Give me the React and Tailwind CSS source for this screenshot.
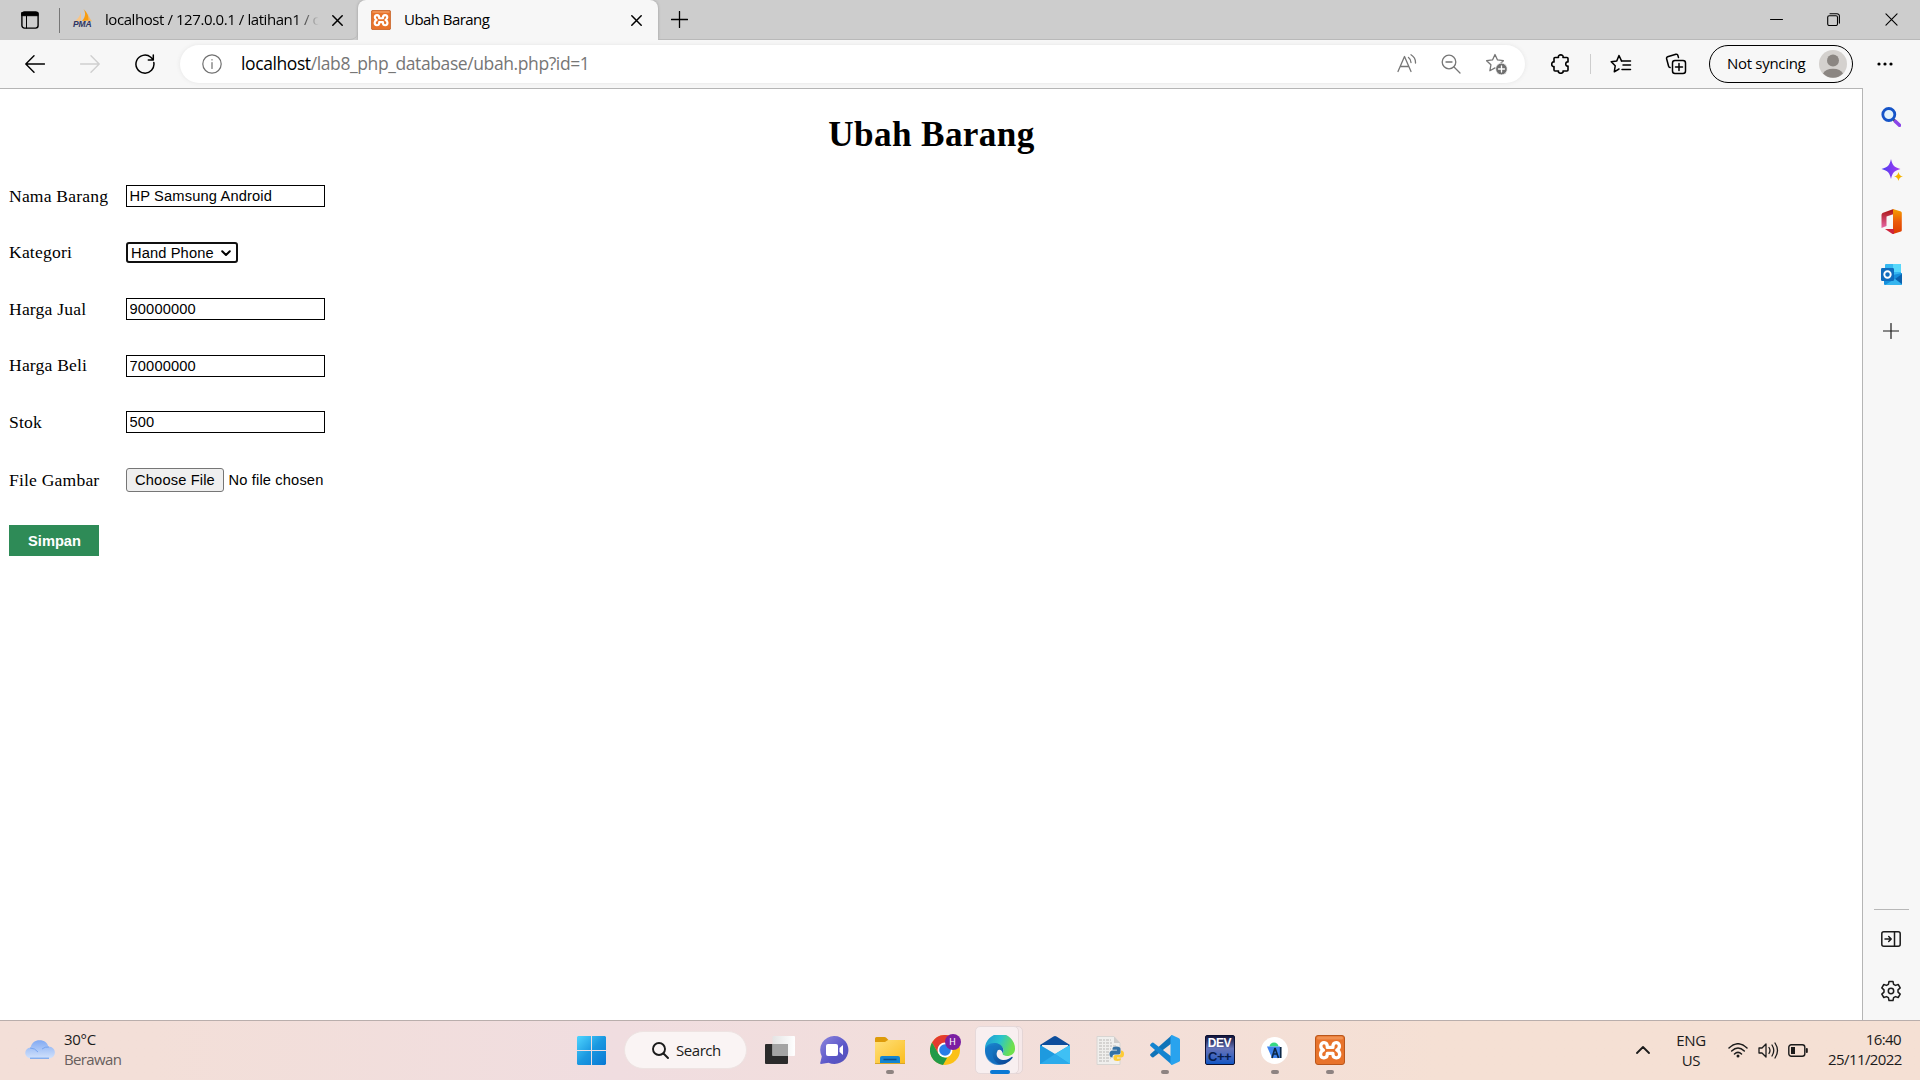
import React from "react";

const ui = "font-['Open_Sans','Noto_Sans',sans-serif]";

function Svg({ w = 20, h, vb, className = "", sw = 1.4, children }) {
  const hh = h || w;
  return (
    <svg width={w} height={hh} viewBox={vb || `0 0 ${w} ${hh}`} fill="none" stroke="currentColor" strokeWidth={sw} strokeLinecap="round" strokeLinejoin="round" className={"block shrink-0 " + className}>
      {children}
    </svg>
  );
}

function Close({ s = 11, sw = 1.5 }) {
  return (
    <Svg w={s} vb="0 0 11 11" sw={sw}>
      <path d="M.8 .8l9.4 9.4M10.2 .8L.8 10.2" />
    </Svg>
  );
}

function Xampp({ size }) {
  return (
    <svg width={size} height={size} viewBox="0 0 30 30" className="block shrink-0">
      <rect x=".5" y=".5" width="29" height="29" rx="2.5" fill="#e8732b" stroke="#b9561b" />
      <rect x="2" y="1.5" width="26" height="3" rx="1.5" fill="#f5a56d" opacity=".6" />
      <path d="M12.300 11.500C12.300 6.500 5.800 6.500 5.800 11c0 2 1 3.200 2.600 4.100C6.500 16 5.500 17.300 5.500 19.300c0 4.700 6.500 4.700 6.800.2v-1.200h5.600v1.200c.3 4.500 6.800 4.500 6.800-.2 0-2-1-3.300-2.900-4.200 1.600-.9 2.600-2.100 2.600-4.100 0-4.500-6.500-4.500-6.500.5v.9h-5.600z" fill="none" stroke="#fff" strokeWidth="3.300" strokeLinejoin="round" />
    </svg>
  );
}

function Pma() {
  return (
    <div className="relative h-[21px] w-[21px] shrink-0">
      <svg width="21" height="21" viewBox="0 0 21 21" className="block">
        <path d="M8 1.500C8 6 5 10 1.500 12.500L8 11.500z" fill="#f9c585" />
        <path d="M10.500 0c2.500 4 2 8-1.500 12l7-.5C16 7 14 3 10.500 0z" fill="#f89c0e" />
        <path d="M15.500 4c0 4 1.500 6 4 8.500l-4-.8z" fill="#f7b763" />
      </svg>
      <span className="absolute top-[11px] left-0 font-['Liberation_Sans',sans-serif] text-[8.500px] leading-[9px] font-bold tracking-[-0.1px] text-[#2f3561] italic">PMA</span>
    </div>
  );
}

function TabBar() {
  return (
    <div className="flex h-10 shrink-0 items-stretch bg-[#cdcdcd] text-black">
      <div className="flex w-[59px] items-center pl-[21px]">
        <Svg w={18}>
          <rect x=".9" y=".9" width="16.200" height="16.200" rx="2.500" />
          <path d="M1 1.500h16v3.200H1z" fill="currentColor" strokeWidth="1" />
          <path d="M5.500 5v12" strokeWidth="1" />
        </Svg>
      </div>
      <div className="mt-2 h-[25px] w-px bg-[#777]" />
      <div className="flex w-[298px] items-center rounded-br-lg border-b border-[#b9b9b9] pl-[13px]">
        <Pma />
        <div className={ui + " ml-[11px] w-[218px] bg-linear-to-r from-black from-86% to-[#cdcdcd] to-98% bg-clip-text text-[15px] tracking-[-0.43px] whitespace-nowrap text-transparent"}>localhost / 127.0.0.1 / latihan1 / c</div>
        <div className="ml-[9px] pt-px"><Close /></div>
      </div>
      <div className="flex w-[300px] items-center rounded-t-lg bg-[#f7f7f7] pl-[13px] shadow-[0_0_3px_#9a9a9a]">
        <Xampp size={20} />
        <span className={ui + " mb-[2px] ml-[13px] grow text-[15px] tracking-[-0.550px]"}>Ubah Barang</span>
        <div className="mr-[16px] pt-px"><Close /></div>
      </div>
      <div className="flex grow items-center border-b border-[#b9b9b9]">
        <Svg w={17} className="ml-[13px]" sw={1.300}><path d="M8.500 .5v16M.5 8.500h16" /></Svg>
        <Svg w={13} className="ml-auto"><path d="M.5 6.500h12" strokeWidth="1" /></Svg>
        <Svg w={13} className="ml-[44px]" sw={1.100}>
          <rect x=".7" y="2.700" width="9.800" height="9.800" rx="1.500" />
          <path d="M3 .7h7a2.400 2.400 0 0 1 2.400 2.400v7" />
        </Svg>
        <div className="mr-[22px] ml-[45px]"><Close s={13} sw={0.950} /></div>
      </div>
    </div>
  );
}

const starPath = "M10 1.500l2.500 5.400 5.900.8-4.300 4.100 1 5.900L10 14.900l-5.100 2.800 1-5.900L1.600 7.700l5.900-.8z";

function Toolbar() {
  return (
    <div className="flex h-12 shrink-0 items-center bg-[#f7f7f7] pb-px text-black">
      <Svg w={20} h={18} className="ml-[25px]"><path d="M19.500 9H1M9 .8L.8 9 9 17.200" /></Svg>
      <Svg w={20} h={18} className="ml-[35px] text-[#cfcfcf]"><path d="M.5 9H19M11 .8L19.200 9 11 17.200" /></Svg>
      <Svg w={20} className="ml-[35px]" sw={1.500}><path d="M18.800 8.500a9 9 0 1 1-3-5.200l2.200 2.200M18.300 1v5h-5" /></Svg>
      <div className="ml-[25px] flex h-[38px] w-[1345px] items-center rounded-full bg-white shadow-[0_0_4px_#e5e5e5]">
        <Svg w={20} className="ml-[22px] text-[#707070]" sw={1.200}>
          <circle cx="10" cy="10" r="9.200" /><path d="M10 8.500v6M10 5.500v.5" />
        </Svg>
        <div className={ui + " ml-[19px] grow text-[17.500px] tracking-[-0.400px] text-[#767676]"}><span className="text-black">localhost</span>/lab8_php_database/ubah.php?id=1</div>
        <Svg w={20} className="text-[#767676]" sw={1.300}><path d="M1 17.500L7.500 2.500 14 17.500M3.300 12.500h8.400M11.500 3.500q2.500 1.800 2.500 5M14 .8q4.800 3 4.500 8.200" /></Svg>
        <Svg w={20} className="ml-[24px] text-[#767676]" sw={1.300}><circle cx="8" cy="8" r="6.800" /><path d="M13 13l6 6M5 8h6" /></Svg>
        <Svg w={23} h={22} className="mr-[17px] ml-[24px] text-[#767676]" sw={1.300}>
          <path d={starPath} />
          <circle cx="16.500" cy="16" r="5.900" fill="#707070" stroke="#fff" strokeWidth=".8" /><path d="M16.500 13v6M13.500 16h6" stroke="#fff" />
        </Svg>
      </div>
      <Svg w={20} className="ml-[26px]" sw={1.600}>
        <path d="M4 3.500h3.500c-1-3.500 5.500-3.500 4.500 0H16a1 1 0 0 1 1 1V8c-3-1-3 5 0 4v4a1 1 0 0 1-1 1h-4c1 3-5.500 3-4.500 0H4a1 1 0 0 1-1-1v-3.500c-3 1-3-5.500 0-4.500V4.500a1 1 0 0 1 1-1z" />
      </Svg>
      <div className="ml-[19px] h-5 w-px bg-[#cdcdcd]" />
      <Svg w={22} h={20} className="ml-[19px]" sw={1.500}>
        <path d="M11.500 6.900L9 1.500 6.800 6.900l-5.600.8 4 4.100-.9 6 4.700-2.800" /><path d="M11.500 6.900h9M13 11h7.500M12 15.500h8.500" />
      </Svg>
      <Svg w={22} className="ml-[33px]" sw={1.500}>
        <rect x="7.500" y="7.500" width="13" height="13" rx="2.500" /><path d="M14 10.500v7M10.500 14h7M13.500 4.500l-.7-2.200a1.500 1.500 0 0 0-1.900-1L2.600 3.800a1.500 1.500 0 0 0-1 1.900l2 7.500q.4 1.200 1.500 1.400" />
      </Svg>
      <div className="ml-[22px] flex h-[38px] w-[144px] items-center rounded-full border-[1.500px] border-black pl-[17px]">
        <span className={ui + " w-[84px] pb-px text-[15px] tracking-[-0.3px] whitespace-nowrap"}>Not syncing</span>
        <svg width="28" height="28" viewBox="0 0 28 28" className="ml-[8px] block shrink-0">
          <circle cx="14" cy="14" r="14" fill="#d4d1ce" /><circle cx="14" cy="10.500" r="6" fill="#8b8682" /><path d="M4 23.500a10.500 7 0 0 1 20 0 14 14 0 0 1-20 0z" fill="#8b8682" />
        </svg>
      </div>
      <Svg w={18} h={4} className="ml-[23px]"><g fill="currentColor" stroke="none"><circle cx="3" cy="2" r="1.600" /><circle cx="9" cy="2" r="1.600" /><circle cx="15" cy="2" r="1.600" /></g></Svg>
    </div>
  );
}

function Row({ label, children }) {
  return (
    <div className="flex h-[56.500px] items-center">
      <label className="mb-px w-[117px] text-[17.600px] leading-[20px] tracking-[0.180px]">{label}</label>
      {children}
    </div>
  );
}

function Field({ value }) {
  return <input defaultValue={value} className="h-[22px] w-[199px] border border-black bg-white px-[2.500px] font-['Liberation_Sans',Arial,sans-serif] text-[14.667px] leading-[18px] tracking-[0.150px] text-black" />;
}

function Page() {
  return (
    <main className="w-[1863px] border-t border-r border-[#b5b5b5] bg-white pl-[9px] font-['Liberation_Serif','Times_New_Roman',serif] text-black">
      <h1 className="mt-[25px] -ml-[9px] h-[54px] pt-px pl-px text-center text-[35.200px] leading-[40px] font-bold tracking-[0.360px]">Ubah Barang</h1>
      <Row label="Nama Barang"><Field value="HP Samsung Android" /></Row>
      <Row label="Kategori">
        <button className="flex h-[21px] w-[112px] items-center justify-between rounded-[3px] border-2 border-[#101010] bg-white pt-px pr-[5px] pl-[3px] font-['Liberation_Sans',Arial,sans-serif] text-[14.667px] leading-[17px] tracking-[0.120px] whitespace-nowrap">
          Hand Phone
          <Svg w={10} h={7} sw={2}><path d="M1.200 1.200L5 5l3.800-3.800" /></Svg>
        </button>
      </Row>
      <Row label="Harga Jual"><Field value="90000000" /></Row>
      <Row label="Harga Beli"><Field value="70000000" /></Row>
      <Row label="Stok"><Field value="500" /></Row>
      <div className="mt-[1.500px]">
        <Row label="File Gambar">
          <div className="flex items-center font-['Liberation_Sans',Arial,sans-serif] text-[14.667px] tracking-[0.150px]">
            <button className="h-[24px] w-[98px] rounded-[3px] border border-[#767676] bg-[#efefef] leading-[20px] whitespace-nowrap">Choose File</button>
            <span className="ml-[4.500px]">No file chosen</span>
          </div>
        </Row>
      </div>
      <button className="mt-[16.500px] block h-[31px] w-[90px] bg-[#2e8b57] pl-px font-['Liberation_Sans',Arial,sans-serif] text-[14.667px] font-bold text-white">Simpan</button>
    </main>
  );
}

function Sidebar() {
  return (
    <aside className="flex w-[57px] flex-col items-center bg-[#f7f7f7] pr-px text-[#1b1b1b]">
      <svg width="20" height="20" viewBox="0 0 20 20" className="mt-[19px] block">
        <path d="M12.500 12.500l2 2" stroke="#555" strokeWidth="2.500" /><path d="M14.500 14.500l4 3.800" stroke="#8b45e8" strokeWidth="3.600" strokeLinecap="round" />
        <circle cx="7.800" cy="7.500" r="6" fill="#e3f3fb" stroke="#1554c8" strokeWidth="2.800" />
      </svg>
      <svg width="22" height="22" viewBox="0 0 22 22" className="mt-[32px] ml-px block">
        <defs><linearGradient id="sp"><stop stopColor="#4b3df0" /><stop offset="1" stopColor="#a93bf2" /></linearGradient></defs>
        <path d="M10 0c1.500 6.500 3 8.200 9.500 10C13 11.800 11.500 13.500 10 20 8.500 13.500 7 11.800.5 10 7 8.200 8.500 6.500 10 0z" fill="url(#sp)" />
        <path d="M17.500 13c.8 3 1.500 3.700 4.500 4.500-3 .8-3.700 1.500-4.500 4.500-.8-3-1.500-3.700-4.500-4.500 3-.8 3.700-1.500 4.500-4.500z" fill="#f4b400" />
      </svg>
      <svg width="21" height="25" viewBox="0 0 21 25" className="mt-[28px] block">
        <defs><linearGradient id="of" x2="0" y2="1"><stop stopColor="#f5a000" /><stop offset=".5" stopColor="#eb5a08" /><stop offset="1" stopColor="#dc3a00" /></linearGradient><linearGradient id="of2" x2="0" y2="1"><stop stopColor="#a9120e" /><stop offset="1" stopColor="#e668a8" /></linearGradient></defs>
        <path d="M12.500 0L1.500 4Q.5 5 .5 6v13l5-2V7.500L13 5z" fill="url(#of2)" />
        <path d="M12 0l8 2.500q.8.5.8 1.500v17q0 1-.8 1.500L12 25z" fill="url(#of)" />
        <path d="M4 20h9v5h-1.500z" fill="#cf243c" />
      </svg>
      <svg width="21" height="21" viewBox="0 0 21 21" className="mt-[30px] block">
        <rect x="4" y="0" width="16" height="14" rx="1" fill="#35b8f1" /><path d="M12 0h7q1 0 1 1v7h-8z" fill="#57d8fb" />
        <path d="M3 13l18-4v11q0 1-1 1H4q-1 0-1-1z" fill="#1690dd" /><path d="M21 10v10l-7-5z" fill="#0b62ae" /><path d="M4 21l10-6 7 5.500q-.5.500-1 .5z" fill="#36b5ef" />
        <rect y="4" width="13" height="13" rx="1.200" fill="#0f6cbd" /><circle cx="6.500" cy="10.500" r="3.200" fill="none" stroke="#fff" strokeWidth="1.900" />
      </svg>
      <Svg w={16} className="mt-[38px]" sw={1.200}><path d="M8 .5v15M.5 8h15" /></Svg>
      <div className="mt-auto h-px w-[35px] bg-[#b8b8b8]" />
      <Svg w={20} h={16} className="mt-[21px]" sw={1.500}><rect x=".8" y=".8" width="18.400" height="14.400" rx="2" /><path d="M13.500 1v14M4 8h6M7.700 5.500L10.200 8l-2.500 2.500" /></Svg>
      <Svg w={22} className="mt-[33px] mb-[18px]" vb="0 0 22 22" sw={1.500}>
        <circle cx="11" cy="11" r="2.700" />
        <path d="M9 1.500h4l.6 2.800 1.900 1.100 2.700-.9 2 3.400L18 9.900v2.200l2.200 2-2 3.400-2.700-.9-1.900 1.100-.6 2.800H9l-.6-2.800-1.900-1.100-2.700.9-2-3.400 2.200-2V9.900l-2.200-2 2-3.400 2.700.9 1.900-1.100z" />
      </Svg>
    </aside>
  );
}

function Start() {
  return (
    <svg width="29" height="29" viewBox="0 0 29 29">
      <defs><linearGradient id="st" x1="0" y1="0" x2="29" y2="29" gradientUnits="userSpaceOnUse"><stop stopColor="#4fd5ff" /><stop offset=".5" stopColor="#1b98e0" /><stop offset="1" stopColor="#0878d4" /></linearGradient></defs>
      <path d="M1 0h13v14H0V1zM15 0h13l1 1v13H15zM0 15h14v14H1l-1-1zM15 15h14v13l-1 1H15z" fill="url(#st)" />
    </svg>
  );
}

function TaskView() {
  return (
    <svg width="30" height="28" viewBox="0 0 30 28">
      <defs><linearGradient id="tv" x2="1"><stop stopColor="#e4e4e4" /><stop offset="1" stopColor="#fff" /></linearGradient></defs>
      <rect y="8" width="23" height="20" rx="1" fill="#2b2b2b" /><rect x="7.500" width="22.500" height="20" rx="1" fill="url(#tv)" /><path d="M7.500 8H23v12H7.500z" fill="#a4a4a4" />
    </svg>
  );
}

function Chat() {
  return (
    <svg width="29" height="28" viewBox="0 0 29 28">
      <defs><linearGradient id="ch" x2="1" y2="1"><stop stopColor="#8d86dd" /><stop offset=".6" stopColor="#5a56c8" /><stop offset="1" stopColor="#5350b8" /></linearGradient></defs>
      <path d="M14.500 0a14 14 0 1 1-6 26.700L1 28q-1.200 0-.7-1.500l1.500-6A14 14 0 0 1 14.500 0z" fill="url(#ch)" />
      <rect x="6" y="8" width="12" height="12" rx="2" fill="#fff" /><path d="M19.500 12l3.500-3v10l-3.500-3z" fill="#fff" />
    </svg>
  );
}

function Explorer() {
  return (
    <svg width="30" height="27" viewBox="0 0 30 27">
      <defs><linearGradient id="ex" x2="1" y2="1"><stop stopColor="#ffe07a" /><stop offset="1" stopColor="#fbbd1f" /></linearGradient></defs>
      <path d="M0 1.500Q0 0 1.500 0h8q1 0 1.500.6L13.500 3H30v6H0z" fill="#dd9b0a" /><path d="M0 5h10l3-2h16q1 0 1 1v22H0z" fill="url(#ex)" />
      <path d="M5 26v-5q0-2 2-2h16q2 0 2 2v5z" fill="#1485d1" /><path d="M8.500 22.500h13" stroke="#0a4f8a" strokeWidth="1.500" /><path d="M0 26h30v1H0z" fill="#d9a528" />
    </svg>
  );
}

function Chrome() {
  return (
    <div className="relative">
      <svg width="30" height="30" viewBox="0 0 30 30" className="block">
        <circle cx="15" cy="15" r="15" fill="#fbc116" />
        <path d="M2 7.500A15 15 0 0 1 28 7.500H15v7.500L8.500 18.800z" fill="#e33b2e" /><path d="M2 7.500l6.500 11.300L15 22.500l2 .5-4 7A15 15 0 0 1 2 7.500z" fill="#229a48" />
        <circle cx="15" cy="15" r="7.500" fill="#fff" /><circle cx="15" cy="15" r="5.800" fill="#2a7de8" />
      </svg>
      <span className="absolute -top-px left-[15px] flex h-[16px] w-[16px] items-center justify-center rounded-full bg-[#7b1fa2] font-[Roboto,sans-serif] text-[9px] text-white">H</span>
    </div>
  );
}

function Edge() {
  return (
    <svg width="30" height="30" viewBox="0 0 30 30">
      <defs>
        <linearGradient id="e1" x2="1" y2=".3"><stop stopColor="#2095d8" /><stop offset=".55" stopColor="#2ac4cc" /><stop offset="1" stopColor="#6fe04c" /></linearGradient>
        <linearGradient id="e2" x2=".7" y2="1"><stop stopColor="#1b8bd2" /><stop offset="1" stopColor="#0c4a9a" /></linearGradient>
      </defs>
      <path d="M0 14A15 15 0 0 1 30 13.500c.2 5-3.500 7.500-8 7.500-3.500 0-5-1.400-4.500-2.600 2.500-3.500.5-7.900-5-7.900C6 10.500 1 11 0 16z" fill="url(#e1)" />
      <path d="M0 16c0-5.500 5-8.500 10.500-8 5 .5 8 4 8 7.500 0 1-.3 2-1 2.900-.5-2.500-3-3.400-4.500-2.400-2.500 1.500-2 8.500 5 9 4 .3 6.500-1.500 8.500-3 .9-.6 1.600 0 1 .9A15 15 0 0 1 0 16z" fill="url(#e2)" />
      <path d="M10.500 11C5 16 7 27 16 30 5 31 0 23 0 16c0-4 5-6 10.500-5z" fill="#1676c6" opacity=".75" />
      <path d="M12.500 15.500c2-2 5 0 5 2.900-.5 1 .5 2.600 4.500 2.600-5 1.500-10-1-9.500-5.500z" fill="#f7edee" />
    </svg>
  );
}

function Mail() {
  return (
    <svg width="30" height="28" viewBox="0 0 30 28">
      <path d="M0 9L13.500.6q1.500-1 3 0L30 9v6H0z" fill="#0d4e9c" /><path d="M2 9h26v10H2z" fill="#f2efee" /><path d="M0 9l15 9 15-9v19H0z" fill="#23a6e8" /><path d="M30 9v19L15 18z" fill="#3fc0f4" /><path d="M0 28h30L15 18z" fill="#2cabeb" /><path d="M0 9v19l15-10z" fill="#1684cf" opacity=".35" />
    </svg>
  );
}

function PythonFile() {
  return (
    <svg width="28" height="29" viewBox="0 0 28 29">
      <path d="M1 .5h17l6 6.500v21.500H1z" fill="#f0efed" stroke="#d8d5d2" /><path d="M18 .5v6.500h6z" fill="#cfccca" />
      <path d="M3 4h12M3 7h13M3 10h18M3 13h12M3 16h11M3 19h10M3 22h12M3 25h11" stroke="#b9b7b5" strokeWidth="1" strokeDasharray="3 1 2 1" />
      <path d="M20.500 10.500q4 0 4 2.500v3.500q0 2-2 2h-4q-2 0-2 2v1q-3 0-3-3.500t3-3.500h4.500v-.8h-4.500V12.500q0-2 4-2z" fill="#3572a5" /><path d="M21.500 25q-4 0-4-2.500V20.500q0-1.500 2-1.500h3.500q2 0 2-2V14.500q3 0 3 3.500t-3 3.500h-4v1h4q0 2.500-3.500 2.500z" fill="#fdcb35" />
    </svg>
  );
}

function VsCode() {
  return (
    <svg width="30" height="30" viewBox="0 0 30 30">
      <path d="M22 0v8L3.500 22.300q-1 .5-1.800-.2L.5 20.800q-.8-1 0-1.900z" fill="#1073b8" /><path d="M22 30v-8L3.500 7.700q-1-.5-1.800.2L.5 9.200q-.8 1 0 1.900z" fill="#1384d0" /><path d="M22 0l7 3.200q1 .5 1 1.600v20.400q0 1.100-1 1.600L22 30q-1.500-.5-1.500-2V2q0-1.500 1.500-2z" fill="#29a3ee" />
    </svg>
  );
}

function DevCpp() {
  return (
    <div className="flex h-[30px] w-[30px] flex-col items-center rounded-[2px] border border-[#0b1030] bg-linear-to-b from-[#15163c] via-[#6573b8] via-45% to-[#0b56c4] font-['Liberation_Sans',sans-serif] font-bold">
      <span className="h-[14px] text-[12px] leading-[14px] tracking-[-0.4px] text-white">DEV</span>
      <span className="h-[14px] text-[13px] leading-[14px] tracking-[-0.6px] text-[#071c4b]">C++</span>
    </div>
  );
}

function Android() {
  return (
    <div className="relative flex h-[27px] w-[27px] items-center justify-center rounded-full bg-white">
      <svg width="15" height="17" viewBox="0 0 15 17">
        <path d="M2.500 4.500a4.500 4 0 0 1 9 0z" fill="#35d984" /><path d="M0 4.500h13v11.500H5z" fill="#3f83ee" /><path d="M8 6L5 16M8 6l3.500 10M6.500 12h4M13.700 5v11" stroke="#0c2746" strokeWidth="1.700" fill="none" />
      </svg>
    </div>
  );
}

function TaskItem({ children, dot, active }) {
  if (active)
    return (
      <div className="relative flex h-12 w-[55px] items-center justify-center">
        <div className="absolute left-[8px] h-12 w-[43px] rounded-[5px] border border-[#e4d5d5] bg-[#f5e8e9]" />
        <div className="absolute left-[3px] h-12 w-[44px] rounded-[5px] border border-[#e6d9da] bg-[#f8eff0]" />
        <div className="relative">{children}</div>
        <div className="absolute bottom-0 h-1 w-5 rounded-full bg-[#0b79d4]" />
      </div>
    );
  return (
    <div className="relative flex h-12 w-[55px] items-center justify-center">
      {children}
      {dot && <div className="absolute bottom-0 h-1 w-2 rounded-full bg-[#8e8381]" />}
    </div>
  );
}

function Taskbar() {
  return (
    <footer className={ui + " flex h-[60px] shrink-0 items-center border-t border-[#b9aeac] bg-linear-to-r from-[#f3dfd8] from-8% via-[#f0dde0] via-32% to-[#f5e0d4] to-75% pb-px text-[15px] leading-5 text-[#1b1b1b]"}>
      <div className="flex w-[564px] items-center pl-[25px]">
        <svg width="30" height="19" viewBox="0 0 30 19" className="mt-[-1px] block">
          <defs><linearGradient id="cl" x2="0" y2="1"><stop stopColor="#82aaf2" /><stop offset="1" stopColor="#d2e2fc" /></linearGradient></defs>
          <path d="M6 18.500a5.500 5.500 0 0 1-.5-11C7 2.500 10 .3 14.500.3c5 0 8 2.700 8.800 6.200 9 .3 8.500 12 0 12z" fill="url(#cl)" /><path d="M5 18.200h19" stroke="#5e97ee" /><path d="M5 8q5 0 8 4M17 9q3-2.500 7-2" stroke="#78a5f0" fill="none" />
        </svg>
        <div className="mb-[3px] ml-[9px]"><div className="tracking-[-0.3px]">30°C</div><div className="tracking-[-0.650px] text-[#68605d]">Berawan</div></div>
      </div>
      <TaskItem><Start /></TaskItem>
      <div className="ml-[5px] flex h-[38px] w-[123px] items-center rounded-full border border-[#eee3e2] bg-[#faf4f4] pl-[27px]">
        <Svg w={17} sw={1.900}><circle cx="7" cy="7" r="6" /><path d="M11.500 11.500l4.500 4.500" /></Svg>
        <span className="ml-[7px] tracking-[-0.450px]">Search</span>
      </div>
      <div className="ml-[5px] flex">
        <TaskItem><TaskView /></TaskItem>
        <TaskItem><Chat /></TaskItem>
        <TaskItem dot><Explorer /></TaskItem>
        <TaskItem><Chrome /></TaskItem>
        <TaskItem active><Edge /></TaskItem>
        <TaskItem><Mail /></TaskItem>
        <TaskItem><PythonFile /></TaskItem>
        <TaskItem dot><VsCode /></TaskItem>
        <TaskItem><DevCpp /></TaskItem>
        <TaskItem dot><Android /></TaskItem>
        <TaskItem dot><Xampp size={30} /></TaskItem>
      </div>
      <Svg w={14} h={8} className="ml-auto" sw={1.800}><path d="M1 7l6-6 6 6" /></Svg>
      <div className="mb-px ml-[26px] w-[30px] text-center tracking-[-0.3px]"><div>ENG</div><div>US</div></div>
      <Svg w={20} h={15} className="ml-[22px]" sw={1.500}><path d="M1 5q9-8.500 18 0M3.700 8q6.300-6 12.600 0M6.500 11q3.500-3.300 7 0" /><circle cx="10" cy="13" r="1.500" fill="currentColor" stroke="none" /></Svg>
      <Svg w={21} h={17} className="ml-[10px]" sw={1.300}><path d="M1 6v5h3l4 4V2L4 6zM11 5.500q2 3 0 6M14 3q3.500 5.500 0 11M17 1q5 7.500 0 15" /></Svg>
      <Svg w={20} h={13} className="ml-[9px]" sw={1.400}><rect x=".8" y=".8" width="16" height="11.400" rx="2.500" /><path d="M3 3h4v7H3z" fill="currentColor" stroke="none" /><path d="M18.800 5v3" strokeWidth="2" /></Svg>
      <div className="mr-[19px] mb-[3px] ml-[20px] w-[73px] text-right tracking-[-0.580px] whitespace-nowrap"><div>16:40</div><div>25/11/2022</div></div>
    </footer>
  );
}

export default function App() {
  return (
    <div className="flex h-[1080px] w-[1920px] flex-col overflow-hidden bg-[#f7f7f7]">
      <TabBar />
      <Toolbar />
      <div className="flex min-h-0 grow"><Page /><Sidebar /></div>
      <Taskbar />
    </div>
  );
}
